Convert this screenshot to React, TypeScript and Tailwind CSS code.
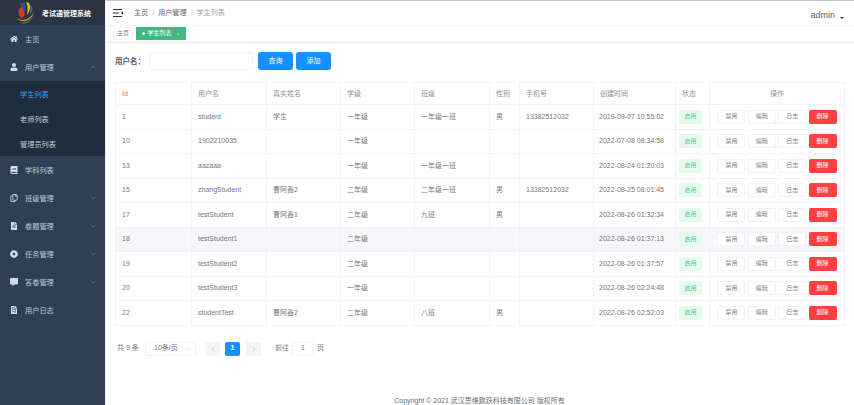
import { FaHome, FaUser, FaBook, FaRegCopy, FaFileAlt, FaDotCircle, FaCommentAlt, FaFileInvoice } from "react-icons/fa";
import { ChevronDown, ChevronUp, ChevronLeft, ChevronRight, X } from "lucide-react";

type Student = {
  id: number;
  username: string;
  realName: string;
  grade: string;
  className: string;
  gender: string;
  phone: string;
  created: string;
};

const students: Student[] = [
  { id: 1, username: "student", realName: "学生", grade: "一年级", className: "一年级一班", gender: "男", phone: "13382512032", created: "2019-09-07 10:55:02" },
  { id: 10, username: "1902210035", realName: "", grade: "一年级", className: "", gender: "", phone: "", created: "2022-07-08 08:34:58" },
  { id: 13, username: "aazaaa", realName: "", grade: "一年级", className: "一年级一班", gender: "", phone: "", created: "2022-08-24 01:20:03" },
  { id: 15, username: "zhangStudent", realName: "曹阿鑫2", grade: "二年级", className: "二年级一班", gender: "男", phone: "13382512032", created: "2022-08-25 08:01:45" },
  { id: 17, username: "testStudent", realName: "曹阿鑫1", grade: "二年级", className: "九班", gender: "男", phone: "", created: "2022-08-26 01:32:34" },
  { id: 18, username: "testStudent1", realName: "", grade: "二年级", className: "", gender: "", phone: "", created: "2022-08-26 01:37:13" },
  { id: 19, username: "testStudent2", realName: "", grade: "二年级", className: "", gender: "", phone: "", created: "2022-08-26 01:37:57" },
  { id: 20, username: "testStudent3", realName: "", grade: "一年级", className: "", gender: "", phone: "", created: "2022-08-26 02:24:48" },
  { id: 22, username: "studentTest", realName: "曹阿鑫2", grade: "二年级", className: "八班", gender: "男", phone: "", created: "2022-08-26 02:52:03" },
];

const headers = ["Id", "用户名", "真实姓名", "学级", "班级", "性别", "手机号", "创建时间", "状态"];
const colWidths = [76, 75, 74, 74, 75, 30, 74, 82, 34, 135];
const font = "font-['Liberation_Sans','Noto_Sans_CJK_SC',sans-serif]";

function MenuItem({ icon, label, arrow }: { icon: React.ReactNode; label: string; arrow?: "up" | "down" }) {
  return (
    <div className="h-[28px] flex items-center pl-[10px] pr-[8px] text-[7.2px] text-[#bfcbd9]">
      <span className="w-[15px] flex items-center text-[8px] text-[#d5dce5]">{icon}</span>
      <span className="pt-[3px]">{label}</span>
      {arrow === "down" && <ChevronDown className="ml-auto text-[#6f7f92]" size={8} />}
      {arrow === "up" && <ChevronUp className="ml-auto text-[#6f7f92]" size={8} />}
    </div>
  );
}

function SubItem({ label, active }: { label: string; active?: boolean }) {
  return (
    <div className={`h-[25px] flex items-center pl-[20px] pt-[3px] text-[7.2px] ${active ? "text-[#409eff]" : "text-[#bfcbd9]"}`}>
      {label}
    </div>
  );
}

function ActionButton({ label, danger }: { label: string; danger?: boolean }) {
  return (
    <span
      className={`w-[28px] h-[14px] flex items-center justify-center rounded-[2px] text-[6px] ${
        danger ? "bg-[#ff4040] text-white" : "bg-white border border-[#f1f2f5] text-[#7c7f85]"
      }`}
    >
      {label}
    </span>
  );
}

function Logo() {
  return (
    <svg width="22" height="24" viewBox="0 0 22 24" className="shrink-0">
      <path d="M5 8 L9 5 L11 14 L7 18 C5 15 4 11 5 8Z" fill="#d8372c" />
      <path d="M6 3 L10 1 C12 4 12 8 11 12 C10 9 8 6 6 3Z" fill="#27508f" />
      <path d="M12 1 L15 2 C17 6 16 10 13 14 C14 9 14 5 12 1Z" fill="#e3c02f" />
      <path d="M16 4 L18 6 C19 9 18 11 15 14 C17 11 17 7 16 4Z" fill="#3a78b5" />
      <path d="M2 16 C6 21 14 20 20 12 C17 20 7 24 2 16Z" fill="#b59a3a" />
      <path d="M5 21 C10 23 16 20 19 15 C17 22 9 25 5 21Z" fill="#3d7a52" />
    </svg>
  );
}

export default function App() {
  return (
    <div className={`w-[854px] h-[405px] flex overflow-hidden bg-white ${font}`}>
      <aside className="w-[105px] h-full shrink-0 flex flex-col bg-[#2f4056]">
        <div className="h-[25px] flex items-center pl-[14px] gap-[6px] bg-[#2b3442]">
          <Logo />
          <span className="pt-[3px] text-[7px] font-bold text-white whitespace-nowrap">考试通管理系统</span>
        </div>
        <MenuItem icon={<FaHome />} label="主页" />
        <MenuItem icon={<FaUser />} label="用户管理" arrow="up" />
        <div className="bg-[#1f2d3d]">
          <SubItem label="学生列表" active />
          <SubItem label="老师列表" />
          <SubItem label="管理员列表" />
        </div>
        <MenuItem icon={<FaBook />} label="学科列表" />
        <MenuItem icon={<FaRegCopy />} label="班级管理" arrow="down" />
        <MenuItem icon={<FaFileAlt />} label="卷题管理" arrow="down" />
        <MenuItem icon={<FaDotCircle />} label="任务管理" arrow="down" />
        <MenuItem icon={<FaCommentAlt />} label="答卷管理" arrow="down" />
        <MenuItem icon={<FaFileInvoice />} label="用户日志" />
      </aside>

      <main className="flex-1 min-w-0 flex flex-col border-l border-[#eaf2fb]">
        <header className="h-[25px] shrink-0 flex items-center pl-[7px] pr-[10px] border-t border-[#c8c8c8]">
          <svg width="10" height="8" viewBox="0 0 10 8" className="shrink-0">
            <path d="M0 .5H9M0 4H6M0 7.5H9" stroke="#303133" strokeWidth="1" fill="none" />
            <path d="M10 2.2V5.8L7.6 4Z" fill="#303133" />
          </svg>
          <nav className="ml-[11px] flex items-center text-[7.1px] text-[#60646b]">
            <span>主页</span>
            <span className="mx-[4px] text-[#c0c4cc]">/</span>
            <span>用户管理</span>
            <span className="mx-[4px] text-[#c0c4cc]">/</span>
            <span className="text-[#a0a4aa]">学生列表</span>
          </nav>
          <span className="ml-auto mt-[6px] text-[9px] text-[#5a5e66]">admin</span>
          <span className="ml-[5px] mt-[10px] w-0 h-0 border-x-[2px] border-x-transparent border-t-[2px] border-t-[#303133]" />
        </header>

        <div className="h-[17px] shrink-0 flex items-center gap-[3px] pl-[7px] border-y border-[#eff1f3] shadow-[0_1px_2px_rgba(0,0,0,0.08)]">
          <span className="w-[20px] h-[13px] flex items-center justify-center bg-white border border-[#f1f2f5] text-[6px] text-[#7c7f85]">主页</span>
          <span className="w-[50px] h-[13px] flex items-center justify-center gap-[2px] bg-[#42b983] text-[6px] text-white">
            <span className="w-[3px] h-[3px] rounded-full bg-white" />
            学生列表
            <X size={4} className="ml-[2px]" />
          </span>
        </div>

        <section className="flex-1 min-h-0 flex flex-col pl-[9px] pr-[10px]">
          <div className="h-[18px] mt-[10px] shrink-0 flex items-center">
            <label className="w-[34px] pt-[2px] text-[7.5px] font-bold text-[#55585e]">用户名：</label>
            <span className="w-[104px] h-full bg-white border border-[#f1f2f5] rounded-[2px]" />
            <button className="ml-[5px] w-[35px] h-full rounded-[3px] bg-[#1890ff] text-white text-[7px]">查询</button>
            <button className="ml-[3px] w-[35px] h-full rounded-[3px] bg-[#1890ff] text-white text-[7px]">添加</button>
          </div>

          <table className="mt-[12px] w-[729px] table-fixed border-collapse text-[7px] text-[#75787d]">
            <colgroup>
              {colWidths.map((w, i) => (
                <col key={i} style={{ width: w }} />
              ))}
            </colgroup>
            <thead>
              <tr className="h-[22px]">
                {headers.map((h) => (
                  <th key={h} className="border border-[#f3f4f6] pl-[6px] pt-[2px] text-left font-normal text-[#8c8f95]">{h}</th>
                ))}
                <th className="border border-[#f3f4f6] pt-[2px] font-normal text-[#8c8f95]">操作</th>
              </tr>
            </thead>
            <tbody>
              {students.map((s) => (
                <tr key={s.id} className={`h-[24.5px] ${s.id === 18 ? "bg-[#f5f7fa]" : ""}`}>
                  <td className="border border-[#f3f4f6] pl-[6px]">{s.id}</td>
                  <td className="border border-[#f3f4f6] pl-[6px]">{s.username}</td>
                  <td className="border border-[#f3f4f6] pl-[6px]">{s.realName}</td>
                  <td className="border border-[#f3f4f6] pl-[6px]">{s.grade}</td>
                  <td className="border border-[#f3f4f6] pl-[6px]">{s.className}</td>
                  <td className="border border-[#f3f4f6] pl-[6px]">{s.gender}</td>
                  <td className="border border-[#f3f4f6] pl-[6px]">{s.phone}</td>
                  <td className="border border-[#f3f4f6] pl-[5px] whitespace-nowrap">{s.created}</td>
                  <td className="border border-[#f3f4f6] pl-[3px]">
                    <span className="w-[23px] h-[14px] flex items-center justify-center rounded-[2px] bg-[#e7f9ee] text-[6px] text-[#4fd08a]">启用</span>
                  </td>
                  <td className="border border-[#f3f4f6]">
                    <div className="flex justify-center gap-[2.4px]">
                      <ActionButton label="禁用" />
                      <ActionButton label="编辑" />
                      <ActionButton label="日志" />
                      <ActionButton label="删除" danger />
                    </div>
                  </td>
                </tr>
              ))}
            </tbody>
          </table>

          <div className="mt-[16px] h-[14px] shrink-0 flex items-center pl-[2px] text-[7px] text-[#75787d]">
            <span className="w-[28px]">共 9 条</span>
            <span className="w-[51px] h-full flex items-center justify-between pl-[8px] pr-[5px] border border-[#f1f2f5] rounded-[2px]">
              10条/页
              <ChevronDown size={6} className="text-[#c0c4cc]" />
            </span>
            <span className="ml-[9px] w-[15px] h-full flex items-center justify-center bg-[#f4f4f5] rounded-[2px] text-[#b4b7bd]"><ChevronLeft size={8} /></span>
            <span className="ml-[5px] w-[15px] h-full flex items-center justify-center bg-[#1890ff] rounded-[2px] text-white font-bold">1</span>
            <span className="ml-[6px] w-[15px] h-full flex items-center justify-center bg-[#f4f4f5] rounded-[2px] text-[#b4b7bd]"><ChevronRight size={8} /></span>
            <span className="ml-[14px]">前往</span>
            <span className="ml-[3px] w-[22px] h-full flex items-center justify-center border border-[#f1f2f5] rounded-[2px]">1</span>
            <span className="ml-[3px]">页</span>
          </div>

          <footer className="mt-auto mb-[1px] text-center text-[7px] leading-[7px] text-[#686b70]">
            Copyright © 2021 武汉思维跳跃科技有限公司 版权所有
          </footer>
        </section>
      </main>
    </div>
  );
}
